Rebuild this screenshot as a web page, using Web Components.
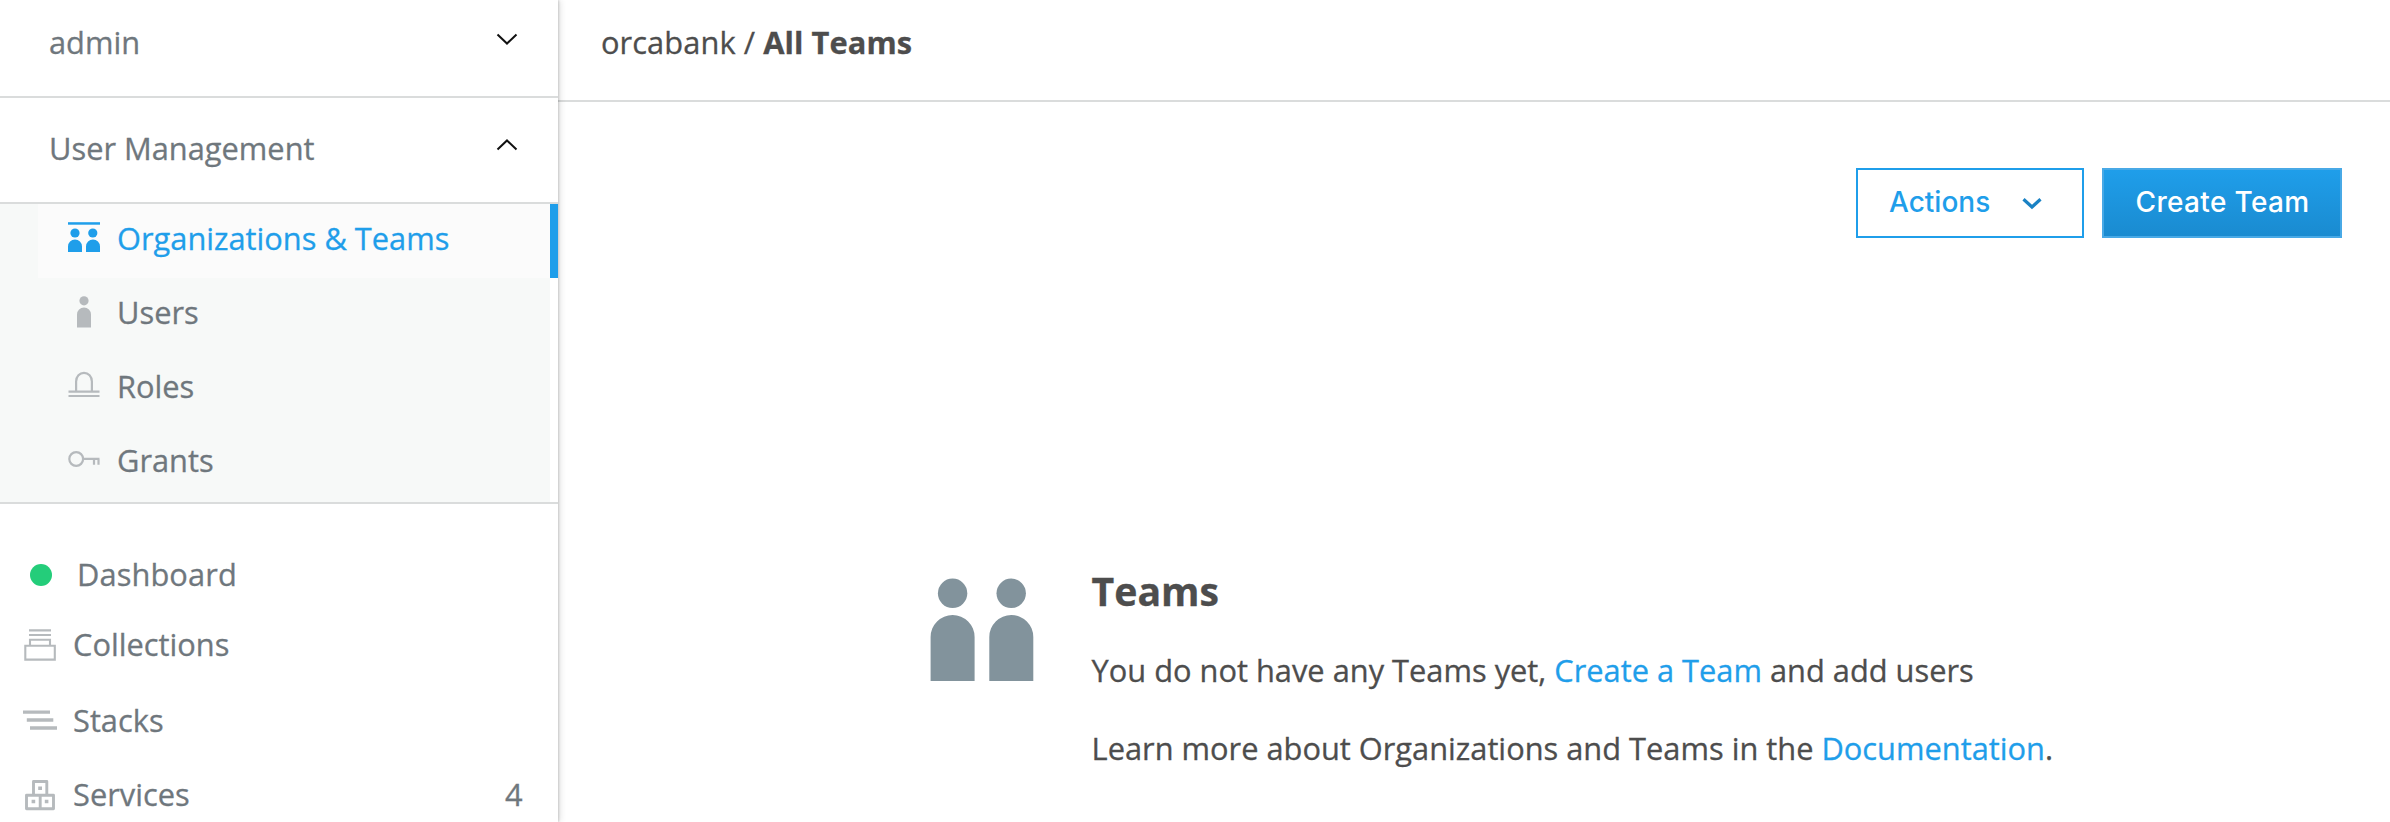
<!DOCTYPE html>
<html lang="en">
<head>
<meta charset="utf-8">
<title>All Teams</title>
<style>
  html, body { margin: 0; height: 100%; }
  body {
    background: #fff;
    color: #4d4d4d;
    font: 30.8px/44px "Open Sans", sans-serif;
    -webkit-text-stroke: .3px;
    overflow: hidden;
  }
</style>
</head>
<body>
<app-shell>
  <side-bar slot="sidebar">
    <side-section class="account" label="admin"></side-section>
    <side-section label="User Management" open>
      <sub-item icon="orgs" active>Organizations &amp; Teams</sub-item>
      <sub-item icon="user">Users</sub-item>
      <sub-item icon="roles">Roles</sub-item>
      <sub-item icon="key">Grants</sub-item>
    </side-section>
    <nav-list>
      <nav-item icon="dot">Dashboard</nav-item>
      <nav-item icon="collections">Collections</nav-item>
      <nav-item icon="stacks">Stacks</nav-item>
      <nav-item icon="services" count="4">Services</nav-item>
    </nav-list>
  </side-bar>
  <crumb-bar slot="header">orcabank / <b>All Teams</b></crumb-bar>
  <tool-bar slot="main">
    <ui-button menu>Actions</ui-button>
    <ui-button primary>Create Team</ui-button>
  </tool-bar>
  <empty-state slot="main" heading="Teams">
    <p>You do not have any Teams yet, <a>Create a Team</a> and add users</p>
    <p>Learn more about Organizations and Teams in the <a>Documentation</a>.</p>
  </empty-state>
</app-shell>

<script>
const ICONS = {
  // 36x36 boxes
  orgs: `<g fill="currentColor"><rect x="2" y="2.2" width="32" height="2.5"/>
    <circle cx="9" cy="13" r="4.6"/><circle cx="26.8" cy="13" r="4.6"/>
    <path d="M2 32V26.500a7 7 0 0 1 14 0V32zM20 32V26.500a7 7 0 0 1 14 0V32z"/></g>`,
  user: `<g fill="currentColor"><circle cx="18" cy="6.800" r="4.600"/><path d="M11 33.500V20.500a7 7 0 0 1 14 0V33.500z"/></g>`,
  roles: `<path d="M10.100 23.700V13.500a7.900 8.700 0 0 1 15.800 0V23.700M2.500 23.700H33.500M2.500 28H33.500" fill="none" stroke="currentColor" stroke-width="2.200"/>`,
  key: `<g fill="none" stroke="currentColor" stroke-width="2.200"><circle cx="10.200" cy="17" r="6.900"/><path d="M17.500 16.900H33.500M28 17V22.700M32.500 17V22.700"/></g>`,
  dot: `<circle cx="19" cy="18" r="11" fill="#24cd7a"/>`,
  collections: `<path d="M7 3.400H29M7 8H29M8 18V12.700H28V18M3.300 18.800H32.800V32.600H3.300z" fill="none" stroke="currentColor" stroke-width="2.100"/>`,
  stacks: `<path d="M1 9.100H28M4.800 17H31.300M8 25H35" fill="none" stroke="currentColor" stroke-width="3.300"/>`,
  services: `<g fill="none" stroke="currentColor" stroke-width="2.900" stroke-linejoin="round">
    <path d="M11.500 17V4.500H24.800V17M4.500 18.300H31.500V31.700H4.500zM18.200 18.300V31.700"/></g>
    <path d="M16.200 9.500h3.800v3.500h-3.800zM9.600 22.700h3.600v3.500h-3.600zM22.800 22.700h3.600v3.500h-3.600z" fill="currentColor"/>`
};

function define(name, render) {
  customElements.define(name, class extends HTMLElement {
    connectedCallback() {
      if (!this.shadowRoot) this.attachShadow({ mode: 'open' }).innerHTML = render(this);
    }
  });
}

define('ui-icon', el => `<style>
  :host { display: block; flex: none; width: 36px; height: 36px; }
  svg { display: block; }
</style><svg width="36" height="36" viewBox="0 0 36 36">${ICONS[el.getAttribute('name')]}</svg>`);

define('ui-chevron', el => `<style>
  :host { display: block; flex: none; }
  :host([up]) svg { transform: scaleY(-1); }
  svg { display: block; }
</style><svg width="22" height="14" viewBox="0 0 22 14"><path d="${el.hasAttribute('bold') ? 'M2.500 3.300L11 11L19.500 3.300' : 'M1.500 2.500L11 11.500L20.500 2.500'}" fill="none" stroke="currentColor" stroke-width="${el.hasAttribute('bold') ? 3.2 : 2}"/></svg>`);

define('app-shell', () => `<style>
  :host { display: grid; grid-template-columns: 558px 1fr; grid-template-rows: 102px 1fr; height: 100vh; }
  aside { grid-row: 1 / 3; display: grid; position: relative; z-index: 1; background: #fff;
    box-shadow: 1px 0 2px rgba(0,0,0,.16), 3px 0 6px rgba(0,0,0,.09); min-height: 0; }
  header { border-bottom: 2px solid #dadcdc; }
</style>
<aside><slot name="sidebar"></slot></aside>
<header><slot name="header"></slot></header>
<main><slot name="main"></slot></main>`);

define('side-bar', () => `<style>
  :host { display: flex; flex-direction: column; height: 100vh; overflow: hidden; color: #6f777d; }
</style><slot></slot>`);

define('side-section', el => {
  const open = el.hasAttribute('open');
  return `<style>
  :host { display: block; flex: none; }
  .head { display: flex; justify-content: space-between; box-sizing: border-box; height: 106px;
    padding: 28px 40px 0 49px; border-bottom: 2px solid #dadcdc; }
  :host(.account) .head { height: 98px; padding-top: 20px; }
  ui-chevron { color: #111; margin-top: 12px; }
  .wrap { border-bottom: 2px solid #dadcdc; }
  .body { width: 550px; height: 298px; background: #f7f9f8; }
</style>
<div class="head"><span>${el.getAttribute('label')}</span><ui-chevron ${open ? 'up' : ''}></ui-chevron></div>
${open ? '<div class="wrap"><div class="body"><slot></slot></div></div>' : ''}`;
});

define('sub-item', el => `<style>
  :host { display: flex; box-sizing: border-box; height: 74px; margin-left: 38px; padding: 12px 0 0 28px; gap: 15px; }
  ui-icon { margin-top: 4px; color: #b6babd; }
  :host([active]) { width: 520px; background: #fbfbfb; border-right: 8px solid #1f9eea; color: #1f9eea; }
  :host([active]) ui-icon { color: inherit; }
</style><ui-icon name="${el.getAttribute('icon')}"></ui-icon><span><slot></slot></span>`);

define('nav-list', () => `<style>
  :host { display: flex; flex-direction: column; padding-top: 48px; }
</style><slot></slot>`);

define('nav-item', el => `<style>
  :host { display: flex; flex: none; height: 44px; padding: 0 35.500px 0 22px; gap: 15px; margin-bottom: 30px; }
  :host([icon="dot"]) { margin-bottom: 26px; gap: 19px; letter-spacing: .1px; }
  :host([icon="collections"]) { margin-bottom: 32px; }
  ui-icon { margin-top: 5px; color: #b6babd; }
  .label { flex: 1; }
</style><ui-icon name="${el.getAttribute('icon')}"></ui-icon><span class="label"><slot></slot></span>${el.hasAttribute('count') ? `<span>${el.getAttribute('count')}</span>` : ''}`);

define('crumb-bar', () => `<style>
  :host { display: block; padding: 20px 0 0 43px; letter-spacing: .08px; }
  ::slotted(b) { font-weight: 700; }
</style><slot></slot>`);

define('tool-bar', () => `<style>
  :host { display: flex; justify-content: flex-end; gap: 18px; padding: 66px 48px 0 0; }
</style><slot></slot>`);

define('ui-button', el => `<style>
  :host { display: flex; align-items: flex-start; box-sizing: border-box; height: 70px; width: 228px;
    padding: 10px 31px 0; border: 2px solid #1f9eea; background: #fff; color: #1f9eea;
    font: 500 28px/44px Inter, sans-serif; -webkit-text-stroke: 0; }
  :host([primary]) { width: 240px; padding-left: 31.500px; border-color: #48a9e6; color: #fff; letter-spacing: .35px;
    background: linear-gradient(#1f9eea, #1a8bd0) padding-box; white-space: nowrap; }
  ui-chevron { color: #1a82c4; margin: 16px 0 0 31px; }
</style><span><slot></slot></span>${el.hasAttribute('menu') ? '<ui-chevron bold></ui-chevron>' : ''}`);

define('empty-state', el => `<style>
  :host { display: flex; gap: 56.600px; padding: 331px 0 0 372px; }
  svg { display: block; flex: none; margin-top: 8px; }
  h2 { margin: 0 0 1px; font-size: 39.200px; line-height: 44px; font-weight: 700; }
  ::slotted(p) { margin: 0; padding-top: 34px; white-space: nowrap; }
  .text { display: flex; flex-direction: column; }
</style>
<svg width="105" height="105" viewBox="0 0 105 105" fill="#82939c">
  <circle cx="22.600" cy="16.300" r="14.700"/><circle cx="81.200" cy="16.300" r="14.700"/>
  <path d="M.6 104V60a22 22 0 0 1 44 0V104zM59.300 104V60a22 22 0 0 1 44 0V104z"/>
</svg>
<div class="text"><h2>${el.getAttribute('heading')}</h2><slot></slot></div>`);

document.querySelectorAll('empty-state a').forEach(a => { a.style.color = '#1f9eea'; });
</script>
</body>
</html>
